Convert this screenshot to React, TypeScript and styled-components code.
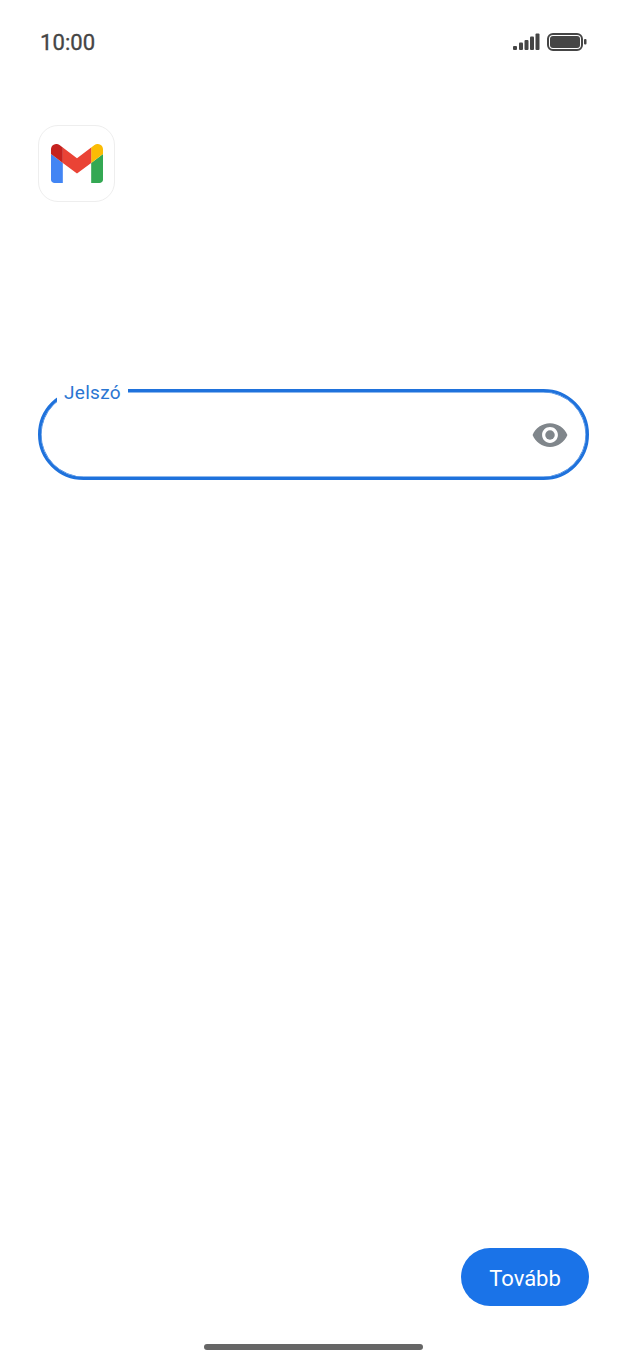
import React from 'react';
import styled, {createGlobalStyle} from 'styled-components';

const GlobalStyle = createGlobalStyle`
  html, body {
    margin: 0;
    padding: 0;
    background: #ffffff;
  }
`;

const Page = styled.div`
  width: 627px;
  height: 1360px;
  display: flex;
  flex-direction: column;
  background: #ffffff;
  font-family: Roboto, "Liberation Sans", sans-serif;
  overflow: hidden;
`;

const StatusBar = styled.div`
  height: 26px;
  margin-top: 29px;
  padding: 0 40px;
  display: flex;
  align-items: center;
  justify-content: space-between;
`;

const Clock = styled.span`
  font-size: 22px;
  color: #454545;
  letter-spacing: 0.1px;
  -webkit-text-stroke: 0.35px #454545;
`;

const StatusIcons = styled.svg`
  display: block;
`;

const AppIcon = styled.div`
  width: 77px;
  height: 77px;
  box-sizing: border-box;
  margin: 70px 0 0 38px;
  border: 1px solid #eeeeee;
  border-radius: 20px;
  display: flex;
  align-items: center;
  justify-content: center;
`;

const Field = styled.div`
  position: relative;
  width: 551px;
  height: 91px;
  box-sizing: border-box;
  margin: 187px 0 0 38px;
  padding-right: 17px;
  border: 3px solid #1f72dc;
  border-radius: 46px;
  box-shadow: inset 0 0 0 0.5px #1f72dc;
  display: flex;
  align-items: center;
  justify-content: flex-end;
`;

const FieldLabel = styled.label`
  position: absolute;
  left: 16px;
  top: -8px;
  padding: 0 7px 0 7px;
  margin-top: -1px;
  height: 21px;
  line-height: 20px;
  font-size: 19px;
  color: #2a76d2;
  background: #ffffff;
  letter-spacing: 0.3px;
`;

const Spacer = styled.div`
  flex: 1;
`;

const Footer = styled.div`
  display: flex;
  justify-content: flex-end;
  padding-right: 38px;
`;

const NextButton = styled.button`
  width: 128px;
  height: 58px;
  border: none;
  border-radius: 29px;
  background: #1a73e8;
  color: #ffffff;
  font-family: inherit;
  font-size: 22px;
  padding: 2px 0 0;
`;

const HomeBar = styled.div`
  width: 219px;
  height: 6px;
  margin: 38px auto 10px;
  border-radius: 3px;
  background: #666666;
`;

const SignalBattery = () => (
  <StatusIcons width="74" height="18" viewBox="0 0 74 18">
    <rect x="0" y="13" width="4" height="4" rx="1" fill="#454545" />
    <rect x="6" y="9.5" width="4" height="7.5" rx="1" fill="#454545" />
    <rect x="11.5" y="7" width="4" height="10" rx="1" fill="#454545" />
    <rect x="17" y="3.5" width="4" height="13.5" rx="1" fill="#454545" />
    <rect x="22.5" y="0.5" width="4" height="16.5" rx="1" fill="#454545" />
    <rect x="35" y="1" width="34" height="16" rx="5" fill="none" stroke="#454545" strokeWidth="2" />
    <rect x="37" y="3" width="30" height="12" rx="3" fill="#454545" />
    <rect x="71" y="6" width="2.5" height="5.5" rx="1" fill="#454545" />
  </StatusIcons>
);

const GmailLogo = () => (
  <svg width="52" height="39" viewBox="52 42 88 66">
    <path fill="#4285f4" d="M58 108h14V74L52 59v43c0 3.32 2.69 6 6 6" />
    <path fill="#34a853" d="M120 108h14c3.32 0 6-2.69 6-6V59l-20 15" />
    <path fill="#fbbc04" d="M120 48v26l20-15v-8c0-7.42-8.47-11.65-14.4-7.2" />
    <path fill="#ea4335" d="M72 74V48l24 18 24-18v26L96 92" />
    <path fill="#c5221f" d="M52 51v8l20 15V48l-5.6-4.2c-5.94-4.45-14.4-.22-14.4 7.2" />
  </svg>
);

const EyeIcon = () => (
  <svg width="38" height="38" viewBox="0 0 24 24">
    <path
      fill="#80868b"
      fillRule="evenodd"
      d="M12 4.5C7 4.5 2.73 7.61 1 12c1.73 4.39 6 7.5 11 7.5s9.27-3.11 11-7.5c-1.73-4.39-6-7.5-11-7.5zM12 17c-2.76 0-5-2.24-5-5s2.24-5 5-5 5 2.24 5 5-2.24 5-5 5z"
    />
    <circle cx="12" cy="12" r="3" fill="#80868b" />
  </svg>
);

export default function App() {
  return (
    <Page>
      <GlobalStyle />
      <StatusBar>
        <Clock>10:00</Clock>
        <SignalBattery />
      </StatusBar>
      <AppIcon>
        <GmailLogo />
      </AppIcon>
      <Field>
        <FieldLabel>Jelszó</FieldLabel>
        <EyeIcon />
      </Field>
      <Spacer />
      <Footer>
        <NextButton>Tovább</NextButton>
      </Footer>
      <HomeBar />
    </Page>
  );
}
